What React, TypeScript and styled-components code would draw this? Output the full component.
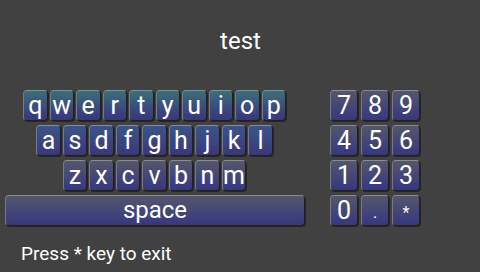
import React from 'react'
import styled, { createGlobalStyle } from 'styled-components'

const GlobalStyle = createGlobalStyle`
  html, body {
    margin: 0;
    padding: 0;
    background: #414141;
  }
`

const rows = [
  { keys: 'qwertyuiop'.split(''), tint: '#3b6e79' },
  { keys: 'asdfghjkl'.split(''), tint: '#3c5488' },
  { keys: 'zxcvbnm'.split(''), tint: '#55566b' },
]

const pad = [
  ['7', '8', '9'],
  ['4', '5', '6'],
  ['1', '2', '3'],
  ['0', '.', '*'],
]

const App = () => {
  return (
    <Screen>
      <GlobalStyle />
      <Title>test</Title>
      <Keyboard>
        <Letters>
          {rows.map((row, i) => (
            <Row key={i}>
              {row.keys.map((k) => (
                <Key key={k} $tint={row.tint}>{k}</Key>
              ))}
            </Row>
          ))}
          <Space $tint="#55566b">space</Space>
        </Letters>
        <Numpad>
          {pad.flat().map((k) => (
            <PadKey key={k} $tint="#55566b" $small={k === '.' || k === '*'}>{k}</PadKey>
          ))}
        </Numpad>
      </Keyboard>
      <Hint>Press * key to exit</Hint>
    </Screen>
  )
}

export default App

const Screen = styled.div`
  width: 480px;
  height: 272px;
  display: flex;
  flex-direction: column;
  background: #414141;
  font-family: Roboto, "Liberation Sans", sans-serif;
  color: #fff;
  overflow: hidden;
`
const Title = styled.div`
  margin-top: 27px;
  height: 28px;
  line-height: 28px;
  font-size: 24px;
  text-align: center;
  padding-left: 1px;
`
const Keyboard = styled.div`
  display: flex;
  margin-top: 35px;
  padding-left: 5px;
  gap: 25px;
`
const Letters = styled.div`
  width: 300px;
  display: flex;
  flex-direction: column;
  align-items: center;
  gap: 4px;
`
const Row = styled.div`
  display: flex;
  gap: 2px;
  padding-right: 1px;
`
const Key = styled.div<{ $tint: string }>`
  box-sizing: border-box;
  width: 24.5px;
  height: 31px;
  display: flex;
  justify-content: center;
  align-items: center;
  font-size: 25px;
  line-height: 1;
  padding-bottom: 1px;
  border-radius: 4px;
  border: 1px solid #1f1f24;
  border-top-color: #8c8c8c;
  border-left-color: #7a7a7a;
  background: linear-gradient(to bottom, ${(p) => p.$tint} 0%, #3a3c7e 85%, #37387d 100%);
  box-shadow: 1px 1px 0 #262626;
`
const Space = styled(Key)`
  width: 300px;
  height: 31px;
  font-size: 24px;
`
const Numpad = styled.div`
  display: grid;
  grid-template-columns: repeat(3, 28px);
  grid-auto-rows: 31px;
  gap: 4px 3px;
`
const PadKey = styled(Key)<{ $small?: boolean }>`
  width: 28px;
  font-size: ${(p) => (p.$small ? '16px' : '25px')};
  padding-top: ${(p) => (p.$small ? '6px' : '0')};
`
const Hint = styled.div`
  margin-top: 17px;
  margin-left: 21px;
  font-size: 19px;
  line-height: 22px;
`
